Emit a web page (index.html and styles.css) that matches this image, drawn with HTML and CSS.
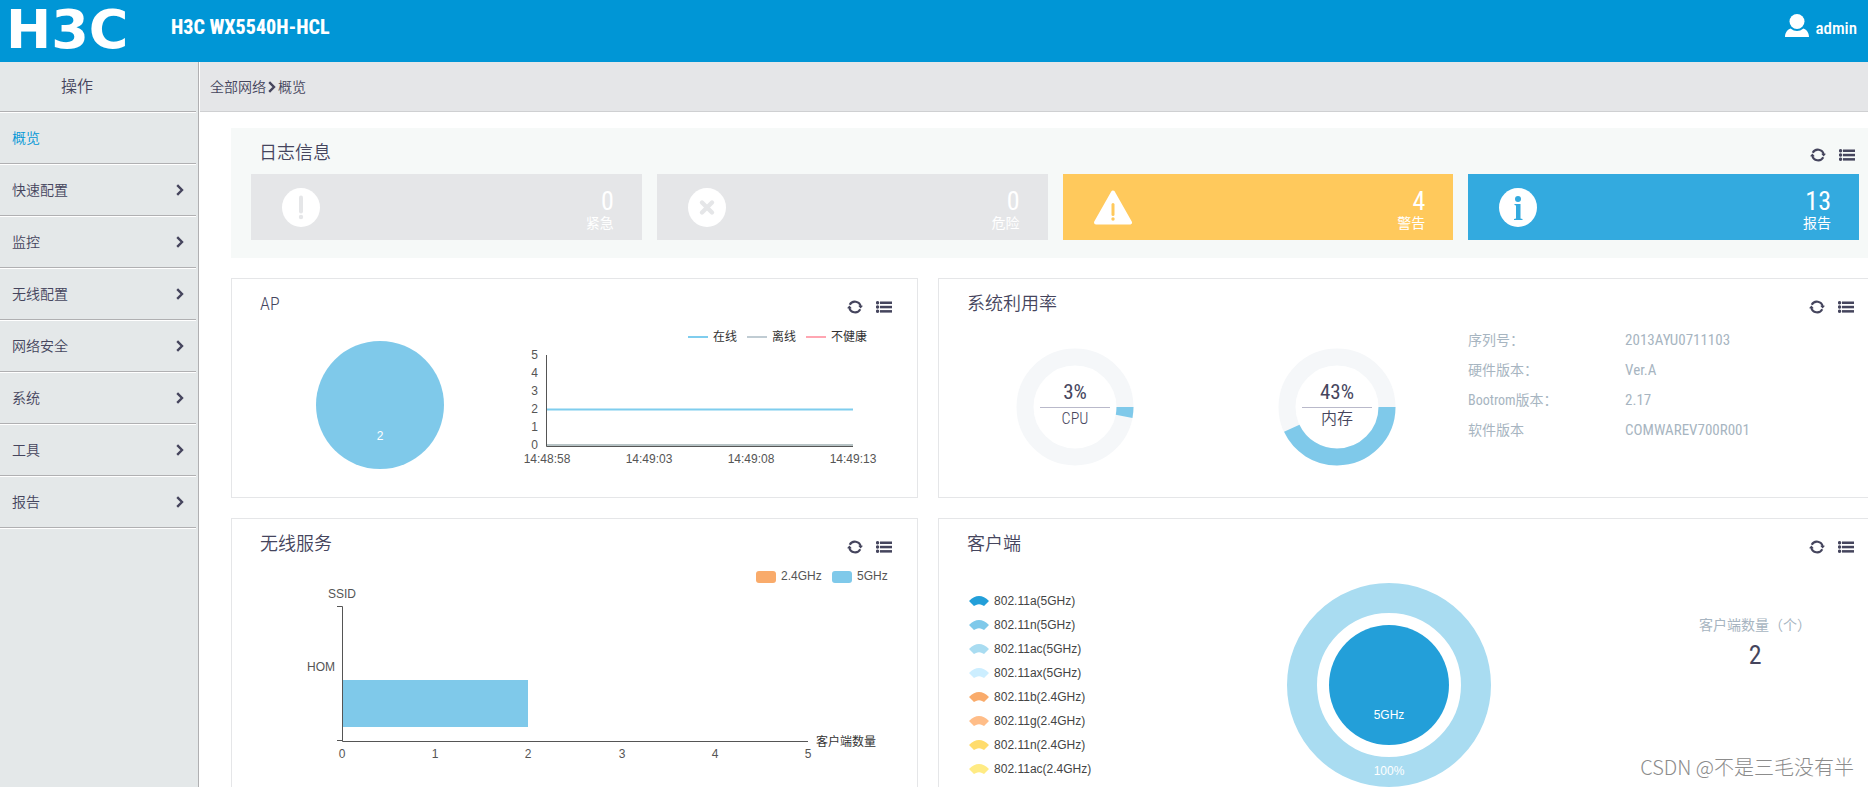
FILE: index.html
```html
<!DOCTYPE html>
<html lang="zh-CN">
<head>
<meta charset="utf-8">
<title>H3C WX5540H-HCL</title>
<link rel="stylesheet" href="styles.css">
</head>
<body>
<svg class="sprite" aria-hidden="true">
  <symbol id="chevron" viewBox="0 0 8 12"><path d="M1.2 1.2 6 6 1.2 10.8" fill="none" stroke="currentColor" stroke-width="2.4"/></symbol>
  <symbol id="refresh" viewBox="0 0 16 14"><g fill="none" stroke="currentColor" stroke-width="2.1"><path d="M2.700 4.700A5.900 5.900 0 0 1 13.700 6.500"/><path d="M13.300 9.300A5.900 5.900 0 0 1 2.300 7.500"/></g><path d="M0 8.300 2.400 5.600 4.800 8.300ZM11.200 5.800H16L13.600 8.500Z" fill="currentColor"/></symbol>
  <symbol id="list" viewBox="0 0 16 12"><g fill="currentColor"><circle cx="1.6" cy="1.7" r="1.7"/><circle cx="1.6" cy="6" r="1.7"/><circle cx="1.6" cy="10.3" r="1.7"/><rect x="4" y="0.5" width="12" height="2.500"/><rect x="4" y="4.800" width="12" height="2.500"/><rect x="4" y="9.100" width="12" height="2.500"/></g></symbol>
  <symbol id="wedge" viewBox="0 0 20 10"><path d="M0 5Q10-5 20 5L15 10L13 9Q10 7.500 7 9L5 10Z" fill="currentColor"/></symbol>
</svg>

<header class="topbar">
  <span class="logo">H3C</span>
  <h1 class="device">H3C WX5540H-HCL</h1>
  <button class="user" type="button">
    <svg width="24" height="23" viewBox="0 0 24 23"><circle cx="12" cy="7.500" r="7.500" fill="#fff"/><path d="M0 23C0 18 3 15.500 5.500 14.500Q12 19.500 18.500 14.500C21 15.500 24 18 24 23Z" fill="#fff"/></svg>
    <span>admin</span>
  </button>
</header>

<div class="layout">
  <nav class="sidebar" aria-label="操作">
    <h2 class="side-title">操作</h2>
    <a class="side-item active" href="#">概览</a>
    <a class="side-item" href="#">快速配置<svg class="chev"><use href="#chevron"/></svg></a>
    <a class="side-item" href="#">监控<svg class="chev"><use href="#chevron"/></svg></a>
    <a class="side-item" href="#">无线配置<svg class="chev"><use href="#chevron"/></svg></a>
    <a class="side-item" href="#">网络安全<svg class="chev"><use href="#chevron"/></svg></a>
    <a class="side-item" href="#">系统<svg class="chev"><use href="#chevron"/></svg></a>
    <a class="side-item" href="#">工具<svg class="chev"><use href="#chevron"/></svg></a>
    <a class="side-item" href="#">报告<svg class="chev"><use href="#chevron"/></svg></a>
  </nav>

  <main class="main">
    <div class="crumbs"><a href="#">全部网络</a><svg class="chev"><use href="#chevron"/></svg><a href="#">概览</a></div>
    <div class="board">
      <section class="logs">
        <div class="head">
          <h3>日志信息</h3>
          <button class="tool" type="button" aria-label="刷新"><svg class="i-refresh"><use href="#refresh"/></svg></button>
          <button class="tool" type="button" aria-label="详情"><svg class="i-list"><use href="#list"/></svg></button>
        </div>
        <div class="cards">
          <a class="card" href="#">
            <svg width="38" height="39" viewBox="0 0 38 39"><ellipse cx="19" cy="19.500" rx="19" ry="19.500" fill="#fff"/><rect x="17" y="7.500" width="4" height="18" rx="2" fill="#e5e6e8"/><circle cx="19" cy="29" r="2.200" fill="#e5e6e8"/></svg>
            <span class="stat"><b>0</b><em>紧急</em></span>
          </a>
          <a class="card" href="#">
            <svg width="38" height="39" viewBox="0 0 38 39"><ellipse cx="19" cy="19.500" rx="19" ry="19.500" fill="#fff"/><path d="M14 14.500 24 24.500M24 14.500 14 24.500" stroke="#e5e6e8" stroke-width="4.400" stroke-linecap="round"/></svg>
            <span class="stat"><b>0</b><em>危险</em></span>
          </a>
          <a class="card warn" href="#">
            <svg width="38" height="39" viewBox="0 0 38 39"><path d="M19 4.500 36 34.500H2Z" fill="#fff" stroke="#fff" stroke-width="4" stroke-linejoin="round"/><rect x="17.500" y="15" width="3" height="13" rx="1.500" fill="#ffc95c"/><circle cx="19" cy="31" r="1.700" fill="#ffc95c"/></svg>
            <span class="stat"><b>4</b><em>警告</em></span>
          </a>
          <a class="card info" href="#">
            <svg width="38" height="39" viewBox="0 0 38 39"><ellipse cx="19" cy="19.500" rx="19" ry="19.500" fill="#fff"/><circle cx="19" cy="11" r="3" fill="#33aadf"/><path d="M15.500 16H21.500V30.500L23.500 31V32H15V31L17 30.500V17.500L15.500 17Z" fill="#33aadf"/></svg>
            <span class="stat"><b>13</b><em>报告</em></span>
          </a>
        </div>
      </section>

      <div class="panels">
        <section class="panel">
          <div class="head">
            <h3>AP</h3>
            <button class="tool" type="button" aria-label="刷新"><svg class="i-refresh"><use href="#refresh"/></svg></button>
            <button class="tool" type="button" aria-label="详情"><svg class="i-list"><use href="#list"/></svg></button>
          </div>
          <div class="body">
            <svg class="chart" width="268" height="168"><circle cx="148" cy="77" r="64" fill="#7fc9ea"/><text x="148" y="112" text-anchor="middle" fill="#fff">2</text></svg>
            <svg class="chart" width="400" height="168">
              <g stroke-width="2"><path d="M188 9h20" stroke="#7fcdee"/><path d="M247 9h20" stroke="#c0ccd3"/><path d="M306 9h20" stroke="#ffa6b2"/></g>
              <g fill="#333"><text x="213" y="13">在线</text><text x="272" y="13">离线</text><text x="331" y="13">不健康</text></g>
              <path d="M46 117h307" stroke="#b7c3c5" stroke-width="2"/>
              <path d="M46.500 27V118.500H353" fill="none" stroke="#555" stroke-width="1"/>
              <path d="M47 81.500H353" stroke="#7fcdee" stroke-width="2"/>
              <g text-anchor="end"><text x="38" y="31">5</text><text x="38" y="49">4</text><text x="38" y="67">3</text><text x="38" y="85">2</text><text x="38" y="103">1</text><text x="38" y="121">0</text></g>
              <g text-anchor="middle"><text x="47" y="135">14:48:58</text><text x="149" y="135">14:49:03</text><text x="251" y="135">14:49:08</text><text x="353" y="135">14:49:13</text></g>
            </svg>
          </div>
        </section>

        <section class="panel">
          <div class="head">
            <h3>系统利用率</h3>
            <button class="tool" type="button" aria-label="刷新"><svg class="i-refresh"><use href="#refresh"/></svg></button>
            <button class="tool" type="button" aria-label="详情"><svg class="i-list"><use href="#list"/></svg></button>
          </div>
          <div class="body usage">
            <svg class="gauge" width="262" height="168">
              <circle cx="131" cy="79" r="50" fill="none" stroke="#f5f7f9" stroke-width="17"/>
              <circle cx="131" cy="79" r="50" fill="none" stroke="#7fc9ea" stroke-width="17" pathLength="100" stroke-dasharray="3 97"/>
              <path d="M96 79.500h70" stroke="#b9b9ca"/>
              <text class="big" x="131" y="71">3%</text><text x="131" y="96">CPU</text>
            </svg>
            <svg class="gauge" width="262" height="168">
              <circle cx="131" cy="79" r="50" fill="none" stroke="#f5f7f9" stroke-width="17"/>
              <circle cx="131" cy="79" r="50" fill="none" stroke="#7fc9ea" stroke-width="17" pathLength="100" stroke-dasharray="43 57"/>
              <path d="M96 79.500h70" stroke="#b9b9ca"/>
              <text class="big" x="131" y="71">43%</text><text x="131" y="96">内存</text>
            </svg>
            <table class="facts">
              <tr><th scope="row">序列号：</th><td>2013AYU0711103</td></tr>
              <tr><th scope="row">硬件版本：</th><td>Ver.A</td></tr>
              <tr><th scope="row">Bootrom版本：</th><td>2.17</td></tr>
              <tr><th scope="row">软件版本</th><td>COMWAREV700R001</td></tr>
            </table>
          </div>
        </section>

        <section class="panel tall">
          <div class="head">
            <h3>无线服务</h3>
            <button class="tool" type="button" aria-label="刷新"><svg class="i-refresh"><use href="#refresh"/></svg></button>
            <button class="tool" type="button" aria-label="详情"><svg class="i-list"><use href="#list"/></svg></button>
          </div>
          <div class="body">
            <svg class="chart" width="680" height="200">
              <rect x="524" y="3" width="20" height="12" rx="3" fill="#f9ab6b"/><rect x="600" y="3" width="20" height="12" rx="3" fill="#7fc9ea"/>
              <text x="549" y="12">2.4GHz</text><text x="625" y="12">5GHz</text>
              <text x="110" y="30" text-anchor="middle">SSID</text>
              <text x="103" y="103" text-anchor="end">HOM</text>
              <rect x="110" y="112" width="186" height="47" fill="#7fc9ea"/>
              <path d="M105 38.500H110.500V173.500H576M105 172.500H110" fill="none" stroke="#555" stroke-width="1"/>
              <g text-anchor="middle"><text x="110" y="190">0</text><text x="203" y="190">1</text><text x="296" y="190">2</text><text x="390" y="190">3</text><text x="483" y="190">4</text><text x="576" y="190">5</text></g>
              <text x="584" y="178" fill="#333">客户端数量</text>
            </svg>
          </div>
        </section>

        <section class="panel tall">
          <div class="head">
            <h3>客户端</h3>
            <button class="tool" type="button" aria-label="刷新"><svg class="i-refresh"><use href="#refresh"/></svg></button>
            <button class="tool" type="button" aria-label="详情"><svg class="i-list"><use href="#list"/></svg></button>
          </div>
          <div class="body clients">
            <ul class="legend">
              <li class="c1"><svg><use href="#wedge"/></svg><span>802.11a(5GHz)</span></li>
              <li class="c2"><svg><use href="#wedge"/></svg><span>802.11n(5GHz)</span></li>
              <li class="c3"><svg><use href="#wedge"/></svg><span>802.11ac(5GHz)</span></li>
              <li class="c4"><svg><use href="#wedge"/></svg><span>802.11ax(5GHz)</span></li>
              <li class="c5"><svg><use href="#wedge"/></svg><span>802.11b(2.4GHz)</span></li>
              <li class="c6"><svg><use href="#wedge"/></svg><span>802.11g(2.4GHz)</span></li>
              <li class="c7"><svg><use href="#wedge"/></svg><span>802.11n(2.4GHz)</span></li>
              <li class="c8"><svg><use href="#wedge"/></svg><span>802.11ac(2.4GHz)</span></li>
            </ul>
            <svg class="chart" width="260" height="240">
              <circle cx="130" cy="117" r="87" fill="none" stroke="#a9dcf1" stroke-width="30"/>
              <circle cx="130" cy="117" r="60" fill="#239fd9"/>
              <g text-anchor="middle" fill="#fff"><text x="130" y="151">5GHz</text><text x="130" y="207">100%</text></g>
            </svg>
            <div class="count"><span>客户端数量（个）</span><strong>2</strong></div>
          </div>
        </section>
      </div>
    </div>
  </main>
</div>
<div class="watermark">CSDN @不是三毛没有半</div>
</body>
</html>
```
FILE: styles.css
```css
* { box-sizing: border-box; }
body {
  margin: 0;
  height: 100vh;
  display: flex;
  flex-direction: column;
  overflow: hidden;
  background: #fff;
  color: #45455d;
  font: 350 14px/20px "Roboto Condensed", "Roboto", "Noto Sans CJK SC", sans-serif;
}
a { color: inherit; text-decoration: none; }
button { border: 0; padding: 0; background: none; color: inherit; font: inherit; }
h1, h2, h3, ul { margin: 0; padding: 0; }
svg { display: block; flex: none; }
.sprite { position: absolute; width: 0; height: 0; }

.topbar {
  flex: none;
  display: flex;
  align-items: flex-start;
  height: 62px;
  padding: 0 11px 0 6px;
  background: #0096d6;
  color: #fff;
}
.logo { width: 165px; font: bold 54px/60px "DejaVu Sans", sans-serif; }
.device { font-size: 20px; line-height: 54px; font-weight: 800; }
.user {
  display: flex;
  align-items: flex-start;
  gap: 6px;
  margin-left: auto;
  padding-top: 14px;
  font-size: 17px;
  line-height: 28px;
  font-weight: 500;
}

.layout { flex: 1; display: flex; min-height: 0; }
.sidebar { flex: none; width: 199px; padding-right: 2px; background: #e4e8e9; border-right: 1px solid #b0b0b2; }
.side-title, .side-item { border-bottom: 1px solid #b0b0b2; box-shadow: 0 1px #fff; margin-bottom: 1px; }
.side-title { height: 50px; padding-left: 61px; font-size: 16px; line-height: 50px; font-weight: 350; }
.side-item { display: flex; align-items: center; justify-content: space-between; height: 51px; padding: 0 12px; }
.active { color: #0096d6; }
.chev { width: 8px; height: 12px; }

.main { flex: 1; min-width: 0; overflow: hidden; padding-left: 1px; }
.crumbs { display: flex; align-items: center; gap: 2px; height: 50px; padding-left: 10px; background: #e5e6e8; border-bottom: 1px solid #cfd0d2; }
.board { padding: 16px 0 0 31px; margin-right: -12px; }

.head { display: flex; align-items: center; gap: 13px; height: 49px; padding: 6px 25px 0 28px; }
.head h3 { flex: 1; font-size: 18px; line-height: 24px; font-weight: 350; padding-bottom: 5px; }
.i-refresh { width: 16px; height: 14px; }
.i-list { width: 16px; height: 12px; }

.logs { padding-bottom: 18px; background: #f6f9f8; }
.logs .head { height: 46px; padding: 8px 25px 0 28px; }
.logs .head h3 { padding-bottom: 4px; }
.cards { display: grid; grid-template-columns: repeat(4, 1fr); gap: 15px; padding: 0 21px 0 20px; }
.card { display: flex; justify-content: space-between; height: 66px; padding: 14px 28px 0 31px; background: #e5e6e8; color: #fff; }
.warn { background: #ffc95c; }
.info { background: #33aadf; }
.stat { display: flex; flex-direction: column; align-items: flex-end; }
.stat b { font-size: 26px; line-height: 26px; font-weight: 400; }
.stat em { font-style: normal; font-weight: 400; line-height: 18px; }

.panels { display: grid; grid-template-columns: calc(100% * 5 / 12) 1fr; gap: 20px; padding-top: 20px; }
.panel { height: 220px; border: 1px solid #e5e6e8; }
.tall { height: 320px; }
.body { display: flex; }
.chart text { font: 12px "Liberation Sans", "Noto Sans CJK SC", sans-serif; }
.chart { fill: #555; }
.usage { padding-left: 5px; }
.gauge { fill: #45455d; text-anchor: middle; font-size: 16px; font-weight: 350; }
.big { font-size: 21px; font-weight: 400; }
.facts { border-collapse: collapse; align-self: flex-start; color: #a7b5c1; margin-top: -3px; }
.facts th, .facts td { height: 30px; padding: 0; text-align: left; font-weight: 400; }
.facts th { width: 157px; }
.facts td { font-size: 15px; }

.legend { list-style: none; width: 320px; padding: 21px 0 0 30px; font: 12px/24px "Liberation Sans", sans-serif; }
.legend li { display: flex; align-items: center; gap: 5px; }
.legend svg { width: 20px; height: 10px; }
.legend span { color: #444; }
.c1 { color: #239fd9; }
.c2 { color: #7fc9ea; }
.c3 { color: #a9dcf1; }
.c4 { color: #cceeff; }
.c5 { color: #f9ab6b; }
.c6 { color: #ffbd88; }
.c7 { color: #ffdc6c; }
.c8 { color: #ffeb84; }
.count { display: flex; flex-direction: column; align-items: center; gap: 6px; width: 114px; margin-left: 179px; padding-top: 47px; color: #a7b5c1; }
.count span { white-space: nowrap; font-weight: 400; }
.count strong { color: #45455d; font-size: 26px; line-height: 28px; font-weight: 400; }

.watermark {
  position: absolute;
  right: 14px;
  bottom: 6px;
  color: #8c8c8c;
  font: 300 20px/28px "Noto Sans CJK SC", sans-serif;
  text-shadow: 1px 1px #fff;
}
```
